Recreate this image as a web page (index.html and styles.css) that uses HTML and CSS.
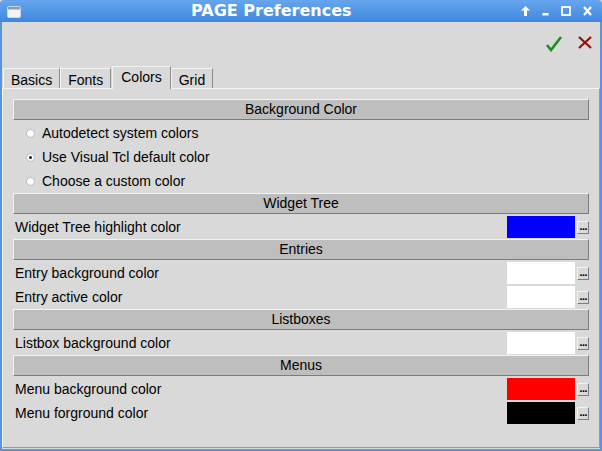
FILE: index.html
```html
<!DOCTYPE html>
<html>
<head>
<meta charset="utf-8">
<link rel="stylesheet" href="styles.css">
</head>
<body>
<div class="window">
  <div class="titlebar">
    <svg class="win-icon" width="14" height="12" viewBox="0 0 14 12">
      <rect x="0.5" y="0.5" width="13" height="11" rx="1.5" fill="#f4f4f4" stroke="#c8d4e4"/>
      <rect x="1" y="1" width="12" height="2.5" fill="#8a9bb2"/>
    </svg>
    <div class="title">PAGE Preferences</div>
    <div class="wm-buttons">
      <svg width="9" height="10" viewBox="0 0 9 10"><path d="M4.5 0 L9 4.5 L6 4.5 L6 10 L3 10 L3 4.5 L0 4.5 Z" fill="#fff"/></svg>
      <svg width="7" height="10" viewBox="0 0 7 10"><rect x="0.5" y="7" width="6" height="2.5" fill="#fff"/></svg>
      <svg width="10" height="10" viewBox="0 0 10 10"><rect x="1" y="1" width="8" height="8" fill="none" stroke="#fff" stroke-width="1.8"/></svg>
      <svg width="9" height="10" viewBox="0 0 9 10"><path d="M1 1 L8 9 M8 1 L1 9" stroke="#fff" stroke-width="2.2"/></svg>
    </div>
  </div>
  <div class="body">
    <div class="toolbar">
      <svg class="tool" width="16" height="16" viewBox="0 0 16 16"><path d="M1 9 L5 14 L15 1" fill="none" stroke="#1e8c1e" stroke-width="2.6"/></svg>
      <svg class="tool" width="14" height="14" viewBox="0 0 14 14"><path d="M1 1 L13 12 M13 1 L1 12" fill="none" stroke="#8e1010" stroke-width="2.2"/></svg>
    </div>
    <div class="tabs">
      <div class="tab">Basics</div>
      <div class="tab">Fonts</div>
      <div class="tab active">Colors</div>
      <div class="tab">Grid</div>
    </div>
    <div class="panel">
      <div class="header">Background Color</div>
      <div class="radio-row"><span class="radio"></span>Autodetect system colors</div>
      <div class="radio-row"><span class="radio on"></span>Use Visual Tcl default color</div>
      <div class="radio-row"><span class="radio"></span>Choose a custom color</div>

      <div class="header">Widget Tree</div>
      <div class="color-row"><span class="label">Widget Tree highlight color</span><span class="swatch blue"></span><span class="dots">...</span></div>

      <div class="header">Entries</div>
      <div class="color-row"><span class="label">Entry background color</span><span class="swatch white"></span><span class="dots">...</span></div>
      <div class="color-row"><span class="label">Entry active color</span><span class="swatch white"></span><span class="dots">...</span></div>

      <div class="header">Listboxes</div>
      <div class="color-row"><span class="label">Listbox background color</span><span class="swatch white"></span><span class="dots">...</span></div>

      <div class="header">Menus</div>
      <div class="color-row"><span class="label">Menu background color</span><span class="swatch red"></span><span class="dots">...</span></div>
      <div class="color-row"><span class="label">Menu forground color</span><span class="swatch black"></span><span class="dots">...</span></div>
    </div>
  </div>
</div>
</body>
</html>
```

FILE: styles.css
```css
html, body {
  margin: 0;
  padding: 0;
  background: #d9d9d9;
}
.window {
  width: 602px;
  height: 451px;
  box-sizing: border-box;
  display: flex;
  flex-direction: column;
  font-family: "Liberation Sans", Arial, sans-serif;
  font-size: 14px;
  color: #000;
  overflow: hidden;
}
.titlebar {
  height: 22px;
  flex: none;
  display: flex;
  align-items: center;
  background: linear-gradient(#67a6ee, #3f87dd);
  border-radius: 4px 4px 0 0;
  color: #fff;
}
.win-icon {
  margin-left: 7px;
  margin-top: 1px;
}
.title {
  margin-left: 170px;
  font-family: "DejaVu Sans", sans-serif;
  font-weight: bold;
  font-size: 16px;
  line-height: 20px;
  flex: 1;
}
.wm-buttons {
  display: flex;
  align-items: center;
  gap: 12px;
  margin-right: 10px;
}
.body {
  flex: 1;
  display: flex;
  flex-direction: column;
  border-left: 2px solid #5a95dc;
  border-right: 2px solid #5a95dc;
  border-bottom: 2px solid #5a95dc;
  background: #d9d9d9;
}
.toolbar {
  height: 44px;
  display: flex;
  justify-content: flex-end;
  align-items: flex-start;
  padding-top: 14px;
  box-sizing: border-box;
  padding-right: 8px;
  gap: 16px;
}
.tabs {
  height: 22px;
  display: flex;
  align-items: flex-end;
  padding-left: 1px;
}
.tab {
  height: 20px;
  box-sizing: border-box;
  padding: 2px 7px 0 7px;
  border-top: 1px solid #f2f2f2;
  border-left: 1px solid #f2f2f2;
  border-right: 1px solid #8c8c8c;
  line-height: 18px;
}
.tab.active {
  height: 23px;
  padding: 1px 8px 0 8px;
  margin-bottom: -1px;
  margin-left: 1px;
  background: #d9d9d9;
  position: relative;
  z-index: 1;
}
.panel {
  flex: 1;
  border-top: 1px solid #f4f4f4;
  border-left: 1px solid #f4f4f4;
  border-right: 1px solid #9a9a9a;
  border-bottom: 1px solid #9a9a9a;
  padding: 10px 10px 0 10px;
  margin-bottom: 1px;
  box-sizing: border-box;
}
.header {
  height: 21px;
  box-sizing: border-box;
  background: #bebebe;
  border-top: 1px solid #f2f2f2;
  border-left: 1px solid #f2f2f2;
  border-bottom: 1px solid #7c7c7c;
  border-right: 1px solid #7c7c7c;
  text-align: center;
  line-height: 19px;
  margin-bottom: 1px;
}
.radio-row {
  height: 24px;
  display: flex;
  align-items: center;
  padding-left: 13px;
}
.radio {
  width: 9px;
  height: 9px;
  box-sizing: border-box;
  border-radius: 50%;
  background: #fff;
  border: 1px solid #b8b8b8;
  margin-right: 7px;
  position: relative;
}
.radio.on::after {
  content: "";
  position: absolute;
  left: 2px;
  top: 2px;
  width: 3px;
  height: 3px;
  border-radius: 50%;
  background: #000;
}
.color-row {
  height: 24px;
  display: flex;
  align-items: center;
}
.label {
  flex: 1;
  padding-left: 2px;
}
.swatch {
  width: 68px;
  height: 22px;
  margin-right: 2px;
}
.swatch.blue { background: #0000ff; }
.swatch.white { background: #ffffff; }
.swatch.red { background: #ff0000; }
.swatch.black { background: #000000; }
.dots {
  width: 12px;
  height: 13px;
  box-sizing: border-box;
  border-top: 1px solid #f4f4f4;
  border-left: 1px solid #f4f4f4;
  border-right: 1px solid #7c7c7c;
  border-bottom: 1px solid #7c7c7c;
  background: #d9d9d9;
  display: flex;
  justify-content: center;
  align-items: center;
  font-family: "DejaVu Sans", sans-serif;
  font-size: 9px;
  font-weight: bold;
  line-height: 9px;
  letter-spacing: -1px;
  white-space: nowrap;
}
```
